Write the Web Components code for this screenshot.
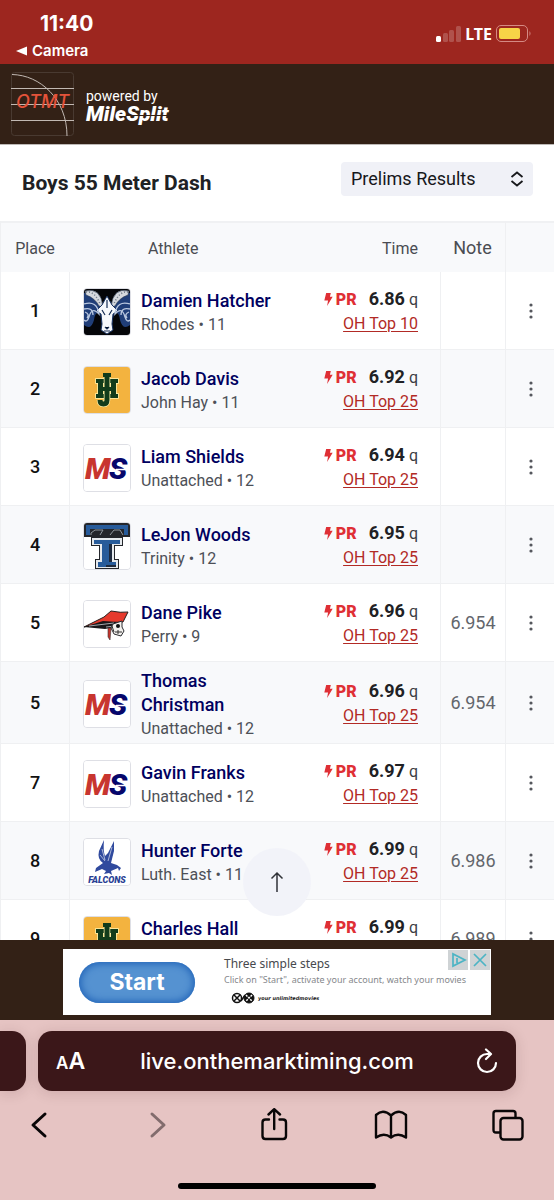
<!DOCTYPE html>
<html lang="en">
<head>
<meta charset="utf-8">
<meta name="viewport" content="width=device-width, initial-scale=1">
<title>Boys 55 Meter Dash</title>
<style>
  html, body { margin: 0; height: 100%; }
  body { font-family: Roboto, "Liberation Sans", sans-serif; color: #202124; background: #fff; }
</style>
</head>
<body>
<phone-screen>
  <status-bar slot="top" time="11:40" back="Camera" network="LTE"></status-bar>
  <site-header slot="top"></site-header>
  <event-bar heading="Boys 55 Meter Dash"></event-bar>
  <results-table></results-table>
  <ad-banner slot="bottom"></ad-banner>
  <browser-bar slot="bottom" address="live.onthemarktiming.com"></browser-bar>
</phone-screen>

<script>
class BaseElement extends HTMLElement {
  connectedCallback() {
    if (this.shadowRoot) return;
    const template = document.createElement('template');
    template.innerHTML = this.render();
    this.attachShadow({ mode: 'open' }).append(template.content.cloneNode(true));
  }
  render() { return ''; }
}

customElements.define('phone-screen', class extends BaseElement {
  render() {
    return `<style>
      :host { display: flex; flex-direction: column; height: 100vh; overflow: hidden; }
      header, footer { flex: none; }
      main { flex: 1; min-height: 0; position: relative; overflow: hidden; }
      .top { position: absolute; left: 50%; bottom: 24px; margin-left: -34px; width: 68px; height: 68px;
        display: grid; place-items: center; padding: 0; border: 0; border-radius: 50%; background: #f1f2f9f2; color: #303238; }
    </style>
    <header><slot name="top"></slot></header>
    <main><slot></slot>
      <button class="top" aria-label="Back to top">
        <svg width="16" height="22" viewBox="0 0 16 22" fill="none" stroke="currentColor" stroke-width="1.5"><path d="M8 21V2M2.500 7.500 8 2l5.500 5.500"/></svg>
      </button>
    </main>
    <footer><slot name="bottom"></slot></footer>`;
  }
});

customElements.define('status-bar', class extends BaseElement {
  render() {
    return `<style>
      :host { display: flex; justify-content: space-between; box-sizing: border-box; height: 64px; padding: 12px 22px 0 16px;
        background: #9d261f; color: #fff; font-family: Inter, "Liberation Sans", sans-serif; }
      time { display: block; padding-left: 24px; font-size: 21px; line-height: 24px; font-weight: 700; }
      a { display: flex; align-items: center; gap: 5px; margin-top: 6px; color: inherit; text-decoration: none; font-size: 15px; line-height: 18px; font-weight: 600; }
      .right { display: flex; align-items: center; gap: 4px; height: 43px; }
      .net { font: 700 16px/20px "Noto Sans", sans-serif; }
    </style>
    <div><time>${this.getAttribute('time')}</time>
      <a href="#camera"><svg width="11" height="10" viewBox="0 0 11 10"><path d="M0 5 11 .500v9z" fill="#fff"/></svg>${this.getAttribute('back')}</a></div>
    <div class="right">
      <svg width="25" height="16" viewBox="0 0 25 16" fill="#fff"><rect y="10" width="5" height="6" rx="1.500"/><g opacity=".2"><rect x="7" y="7" width="5" height="9" rx="1.500"/><rect x="13" y="4" width="5" height="12" rx="1.500"/><rect x="20" width="5" height="16" rx="1.500"/></g></svg>
      <span class="net">${this.getAttribute('network')}</span>
      <svg width="36" height="17" viewBox="0 0 36 17"><rect x=".500" y=".500" width="31" height="16" rx="4.500" fill="none" stroke="#d58a84"/><rect x="3" y="3" width="21" height="11" rx="2" fill="#f7d447"/><path d="M33.500 6q2 2.500 0 5z" fill="#d58a84"/></svg>
    </div>`;
  }
});

customElements.define('site-header', class extends BaseElement {
  render() {
    return `<style>
      :host { display: flex; align-items: center; gap: 11px; box-sizing: border-box; height: 81px; padding: 0 10px; background: #332116; border-bottom: 1px solid #bdb9b6; color: #fff; }
      a { display: block; color: inherit; text-decoration: none; }
      p { margin: 0; padding-top: 4px; font-size: 14px; line-height: 16px; }
      .ms { position: relative; font-size: 21px; line-height: 20px; font-weight: 900; font-style: italic; }
      .ms::after { content: ""; position: absolute; left: 41px; right: 2px; top: 11px; height: 1px; background: #332116; }
      svg { display: block; }
    </style>
    <a href="#home" aria-label="OTMT home"><svg width="65" height="66" viewBox="0 0 65 66" fill="none">
      <rect x="1.500" y="1.500" width="62" height="63" rx="3" stroke="#493a31"/>
      <path d="M1 17.500h63M1 33.500h63M1 49.500h63M2 3.500C30 4 57 28 57 65" stroke="#c2b9b3"/>
      <text x="6" y="37" font-family="Inter, sans-serif" font-style="italic" font-weight="500" font-size="18" fill="#e4533a">OTMT</text></svg></a>
    <div><p>powered by</p><a class="ms" href="#milesplit">MileSplit</a></div>`;
  }
});

customElements.define('event-bar', class extends BaseElement {
  render() {
    return `<style>
      :host { display: flex; justify-content: space-between; align-items: center; box-sizing: border-box; height: 76px; padding: 0 21px 0 22px; }
      h1 { margin: 0; font-size: 21px; line-height: 24px; font-weight: 700; }
      label { position: relative; margin-bottom: 8px; }
      select { appearance: none; display: block; width: 192px; height: 34px; padding: 0 36px 0 10px; border: 0; border-radius: 4px; background: #f0f1f7; color: #17181b; font: 400 18px/34px Roboto, sans-serif; }
      svg { position: absolute; right: 9px; top: 9px; pointer-events: none; }
    </style>
    <h1>${this.getAttribute('heading')}</h1>
    <label><select aria-label="Round"><option>Prelims Results</option></select>
      <svg width="14" height="16" viewBox="0 0 14 16" fill="none" stroke="#17181b" stroke-width="1.800"><path d="M1.500 6 7 1.500 12.500 6M1.500 10 7 14.500 12.500 10"/></svg></label>`;
  }
});

const EMBLEMS = {
  ram: `<rect width="46" height="46" fill="#050609"/>
    <path d="M0 4Q10 3 16 14L23 23 30 14Q36 3 46 4V36Q39 42 36 31Q35 22 30 24L27 41 23 45 19 41 16 24Q11 22 10 31Q7 42 0 36Z" fill="#203e78"/>
    <path d="M1 2Q17-2 19 18L15 17Q11 9 2 6ZM45 2Q29-2 27 18L31 17Q35 9 44 6Z" fill="#d5d8dd" stroke="#27354d" stroke-width=".6"/>
    <path d="M23 7 28 16 34 22 29 25 28 35 29 41 23 45 17 41 18 35 17 25 12 22 18 16Z" fill="#f6f8fc" stroke="#183261"/>
    <path d="M23 11v8M18 21l3 5M28 21l-3 5M21 38l2 2 2-2M20 42h6" stroke="#172d55" stroke-width="1.200"/>
    <path d="M0 15Q13 11 15 25Q8 17 5 28Q3 34 0 31M46 15Q33 11 31 25Q38 17 41 28Q43 34 46 31M0 20q9-2 9 6M46 20q-9-2-9 6M1 23q5 2 2 6M45 23q-5 2-2 6" fill="none" stroke="#b9c7df" stroke-width="1.300"/>
    <path d="M2 3q9-1 14 12M44 3q-9-1-14 12" fill="none" stroke="#6e7887" stroke-width="1.500" stroke-dasharray="1 2"/>`,
  jh: `<rect width="46" height="46" fill="#f3b33f"/>
    <g id="jh" fill="#123c1b" stroke="#fff0a8" stroke-width="1.600" paint-order="stroke">
      <rect x="14" y="13" width="5" height="17"/><rect x="27" y="13" width="5" height="17"/>
      <rect x="12" y="12" width="8" height="4"/><rect x="26" y="12" width="8" height="4"/>
      <rect x="12" y="27" width="8" height="4"/><rect x="26" y="27" width="8" height="4"/></g>
    <path d="M23 8V33Q23 37 19.500 37T16 33" fill="none" stroke="#fff0a8" stroke-width="6.500"/>
    <path d="M23 8V33Q23 37 19.500 37T16 33" fill="none" stroke="#123c1b" stroke-width="5"/>
    <g fill="#123c1b"><rect x="19" y="6" width="8" height="4"/><rect x="15" y="20" width="16" height="4"/>
      <rect x="14" y="14" width="5" height="15"/><rect x="27" y="14" width="5" height="15"/></g>`,
  ms: `<rect width="46" height="46" fill="#fff"/>
    <g font-family="Roboto, sans-serif" font-weight="900" font-style="italic" font-size="30"><text x="1" y="34" fill="#c8352f">M</text><text x="25" y="34" fill="#06066b">S</text></g>
    <path d="M32 24.500h12" stroke="#fff" stroke-width="1.400"/>`,
  tt: `<rect width="46" height="46" fill="#fff"/>
    <g fill="#24262b"><rect width="46" height="14"/><rect x="7" y="14" width="32" height="9"/><rect x="15" y="14" width="16" height="31"/><rect x="11" y="36" width="24" height="10"/></g>
    <g fill="#275b9a"><rect x="2" y="2" width="42" height="4"/><rect x="2" y="6" width="4" height="6"/><rect x="40" y="6" width="4" height="6"/></g>
    <path d="M7 12V10l4-3h8l-3 5M26 12l4-5h6l3 5" fill="none" stroke="#8f969d"/>
    <g fill="#e5e9ed"><rect x="8" y="15" width="30" height="7"/><rect x="16" y="15" width="14" height="29"/><rect x="12" y="37" width="22" height="8"/></g>
    <g fill="#275b9a"><rect x="10" y="17" width="26" height="4"/><rect x="18" y="17" width="10" height="26"/><rect x="14" y="39" width="18" height="5"/></g>
    <g fill="#1d293d"><rect x="25" y="21" width="3" height="18"/><rect x="22" y="42" width="10" height="2"/></g>`,
  pirate: `<rect width="46" height="46" fill="#fff"/>
    <path d="M0 26 20 16 27 10Q37 12 44 11L39 21 19 22Z" fill="#e63a2d" stroke="#26211f"/>
    <path d="M0 26 19 20 34 21 31 26 21 28Z" fill="#171719"/><path d="M5 25 30 22M22 26l9-1" stroke="#a6a8ac" fill="none"/>
    <path d="M29 23 38 20 38 26 40 30 37 35 30 33 27 27Z" fill="#f2f0ed" stroke="#2c2d31"/>
    <circle cx="34" cy="25" r="2" fill="#111"/><path d="M31 31h7M34 29v4M28 25l2 6" stroke="#333"/>
    <path d="M24 27h3l-1 12-2-3Z" fill="#c9342c" stroke="#333" stroke-width=".6"/>`,
  falcon: `<rect width="46" height="46" fill="#fff"/>
    <path d="M20 1 15 12Q13 20 19 24L12 29 11 33 18 30 22 32 20 35 25 34 28 36 27 32 34 29 35 32 37 29 33 26 27 24 30 12 30 2 24 14 21 17Q19 12 20 1Z" fill="#304a9e"/>
    <path d="m18 10 3 11M16 16l5 6M28 8l-4 14" stroke="#fff" stroke-width=".6"/>
    <text x="23" y="44" text-anchor="middle" font-family="Roboto, sans-serif" font-style="italic" font-weight="900" font-size="9" fill="#293f94">FALCONS</text>`
};

customElements.define('team-logo', class extends BaseElement {
  render() {
    return `<style>
      :host { display: block; flex: none; box-sizing: border-box; width: 48px; height: 48px; overflow: hidden; border: 1px solid #dedfe5; border-radius: 4px; }
      svg { display: block; }
    </style><svg width="46" height="46" viewBox="0 0 46 46" aria-hidden="true">${EMBLEMS[this.getAttribute('team')]}</svg>`;
  }
});

customElements.define('record-mark', class extends BaseElement {
  render() {
    return `<style>
      :host { display: inline-flex; align-items: baseline; gap: 3px; color: #df2f35; font-size: 16px; line-height: 24px; font-weight: 900; }
      svg { align-self: center; }
    </style><svg width="9" height="13" viewBox="0 0 9 14" fill="currentColor"><path d="M2 0h5L6 4h3L3 14 4 8H0Z"/></svg><slot></slot>`;
  }
});

const RESULTS = [
  ['1', 'ram', 'Damien Hatcher', 'Rhodes • 11', '6.86', 'OH Top 10', ''],
  ['2', 'jh', 'Jacob Davis', 'John Hay • 11', '6.92', 'OH Top 25', ''],
  ['3', 'ms', 'Liam Shields', 'Unattached • 12', '6.94', 'OH Top 25', ''],
  ['4', 'tt', 'LeJon Woods', 'Trinity • 12', '6.95', 'OH Top 25', ''],
  ['5', 'pirate', 'Dane Pike', 'Perry • 9', '6.96', 'OH Top 25', '6.954'],
  ['5', 'ms', 'Thomas Christman', 'Unattached • 12', '6.96', 'OH Top 25', '6.954'],
  ['7', 'ms', 'Gavin Franks', 'Unattached • 12', '6.97', 'OH Top 25', ''],
  ['8', 'falcon', 'Hunter Forte', 'Luth. East • 11', '6.99', 'OH Top 25', '6.986'],
  ['9', 'jh', 'Charles Hall', '', '6.99', '', '6.989']
];

customElements.define('results-table', class extends BaseElement {
  render() {
    const rows = RESULTS.map(([place, team, name, school, time, rank, note]) => `<tr>
      <td class="place">${place}</td>
      <td class="athlete"><div><team-logo team="${team}"></team-logo><span><a href="#athlete">${name}</a><small>${school}</small></span></div></td>
      <td class="time"><div><record-mark>PR</record-mark><b>${time}</b><i>q</i></div><a href="#rankings">${rank}</a></td>
      <td class="note">${note}</td>
      <td class="more"><button aria-label="More options"><svg width="4" height="16" viewBox="0 0 4 16" fill="#55575d"><circle cx="2" cy="2" r="1.600"/><circle cx="2" cy="8" r="1.600"/><circle cx="2" cy="14" r="1.600"/></svg></button></td></tr>`).join('');
    return `<style>
      :host { display: block; }
      table { width: 100%; table-layout: fixed; border-spacing: 0; border-left: 1px solid #eff0f2; }
      .c-place { width: 68px; } .c-time { width: 140px; } .c-note { width: 65px; } .c-more { width: 49px; }
      th { box-sizing: border-box; height: 51px; padding: 2px 0 0; border-top: 2px solid #f0f1f3; background: #f8f9fb; color: #4a4c52; font-size: 16px; line-height: 24px; font-weight: 400; text-align: center; }
      th.h-athlete { padding-left: 79px; text-align: left; }
      th.h-time { padding-right: 22px; text-align: right; }
      th.h-note { padding-top: 0; font-size: 18px; }
      th:last-child, td + td { border-left: 1px solid #eff0f2; }
      td { box-sizing: border-box; height: 78px; padding: 5px 0 4px; border-bottom: 1px solid #eff0f2; }
      tr:nth-child(even) td { background: #f8f9fb; }
      td.place { text-align: center; font-size: 18px; line-height: 24px; font-weight: 500; color: #111; }
      td.athlete { padding: 4px 10px 2px 13px; }
      .athlete div { display: flex; align-items: center; gap: 10px; }
      .athlete span { padding-top: 3px; }
      .athlete a { display: block; color: #00005f; text-decoration: none; font-size: 18px; line-height: 24px; font-weight: 500; }
      small { display: block; min-height: 24px; color: #4d5057; font-size: 16px; line-height: 24px; }
      td.time { border-left: 0; padding-right: 22px; text-align: right; white-space: nowrap; }
      .time div { display: flex; justify-content: flex-end; align-items: baseline; line-height: 24px; }
      .time b { margin-left: 12px; font-size: 18px; font-weight: 700; }
      .time i { margin-left: 4px; font-size: 16px; font-style: normal; color: #3c3e43; }
      .time > a { display: block; min-height: 24px; color: #b22a25; font-size: 16px; line-height: 24px; text-underline-offset: 2px; }
      td.note { text-align: center; color: #63666c; font-size: 18px; line-height: 24px; }
      td.more { padding-left: 2px; text-align: center; }
      button { padding: 8px; border: 0; background: none; vertical-align: middle; }
      svg { display: block; }
    </style>
    <table>
      <colgroup><col class="c-place"><col><col class="c-time"><col class="c-note"><col class="c-more"></colgroup>
      <thead><tr><th>Place</th><th class="h-athlete">Athlete</th><th class="h-time">Time</th><th class="h-note">Note</th><th></th></tr></thead>
      <tbody>${rows}</tbody>
    </table>`;
  }
});

customElements.define('ad-banner', class extends BaseElement {
  render() {
    return `<style>
      :host { display: flex; justify-content: center; box-sizing: border-box; height: 80px; padding: 9px 0 5px; background: #332116; }
      section { position: relative; display: flex; align-items: center; gap: 29px; box-sizing: border-box; width: 428px; padding-left: 16px; background: #fff; }
      .start { display: grid; place-items: center; width: 116px; height: 41px; border-radius: 21px; background: #5592d1; box-shadow: inset 0 0 7px 2px #2466b9; color: #fff; text-decoration: none; font: 700 23px/40px Inter, sans-serif; }
      p { margin: 0; white-space: nowrap; }
      .title { color: #47494d; font: 400 12px/17px "Noto Sans", sans-serif; }
      .copy { color: #85878b; font: 400 9px/15px "Noto Sans", sans-serif; }
      .brand { display: flex; align-items: center; gap: 3px; height: 22px; padding-left: 7px; color: #222; font: italic 700 5px/8px "DejaVu Sans", sans-serif; }
      .tools { position: absolute; top: 1px; right: 1px; display: flex; gap: 2px; }
      button { display: block; width: 20px; height: 20px; padding: 0; border: 0; background: #cfd3d5; }
      svg { display: block; }
    </style>
    <section aria-label="Advertisement">
      <a class="start" href="#start">Start</a>
      <div><p class="title">Three simple steps</p><p class="copy">Click on "Start", activate your account, watch your movies</p>
      <p class="brand"><svg width="24" height="12" viewBox="0 0 24 12" fill="none" stroke="#111"><circle cx="6" cy="6" r="4.500" stroke-width="1.500"/><path d="m3 3 6 6M9 3 3 9M10 9l4-6" stroke-width="1.500"/><circle cx="18" cy="6" r="5" fill="#111"/><path d="m15 3 6 6M21 3l-6 6" stroke="#fff" stroke-width="1.500" stroke-dasharray="2 1"/></svg>your unlimitedmovies</p></div>
      <div class="tools"><button aria-label="Ad choices"><svg width="20" height="20" viewBox="0 0 20 20" fill="none" stroke="#4cb4c4" stroke-width="1.700"><path d="M5 4v12l12-6ZM9 8v5"/></svg></button>
      <button aria-label="Close ad"><svg width="20" height="20" viewBox="0 0 20 20" stroke="#4cb4c4" stroke-width="1.700"><path d="m4 4 12 12M16 4 4 16"/></svg></button></div>
    </section>`;
  }
});

customElements.define('browser-bar', class extends BaseElement {
  render() {
    return `<style>
      :host { display: flex; flex-direction: column; box-sizing: border-box; height: 180px; padding-top: 11px; background: #e6c4c3; font-family: Inter, "Liberation Sans", sans-serif; }
      .tabs { display: flex; gap: 12px; padding-right: 38px; }
      .peek, .bar { height: 60px; background: #3b1719; box-shadow: 0 2px 14px #3b171926; }
      .peek { width: 26px; border-radius: 0 14px 14px 0; }
      .bar { flex: 1; display: flex; align-items: center; justify-content: space-between; box-sizing: border-box; padding: 0 18px; border-radius: 14px; color: #fff; }
      button { display: grid; place-items: center; width: 34px; height: 34px; padding: 0; border: 0; background: none; color: inherit; font: inherit; }
      .aa { display: flex; align-items: baseline; justify-content: flex-start; width: 30px; font-size: 23px; line-height: 34px; font-weight: 600; }
      .aa small { font-size: 17px; }
      input { flex: 1; min-width: 0; height: 34px; padding: 0 8px 0 0; border: 0; background: none; color: inherit; font: 500 22px/34px Inter, sans-serif; text-align: center; }
      .reload { width: 22px; }
      nav { display: flex; justify-content: space-between; margin-top: 17px; padding: 0 29px 0 22px; color: #090607; }
      .off { color: #826c6d; }
      .home { width: 198px; height: 6px; margin: auto auto 11px; border-radius: 3px; background: #000; }
      svg { display: block; }
    </style>
    <div class="tabs"><div class="peek"></div>
      <div class="bar"><button class="aa" aria-label="Page settings"><small>A</small><span>A</span></button>
        <input aria-label="Address" value="${this.getAttribute('address')}">
        <button class="reload" aria-label="Reload"><svg width="22" height="26" viewBox="0 0 22 26" fill="none" stroke="#fff" stroke-width="2.200" stroke-linecap="round" stroke-linejoin="round"><path d="M13 6H11A9 9 0 1 0 20 15M10 1.500 15 6 10 11"/></svg></button></div></div>
    <nav>
      <button aria-label="Back"><svg width="34" height="34" viewBox="0 0 34 34" fill="none" stroke="currentColor" stroke-width="3" stroke-linecap="round" stroke-linejoin="round"><path d="M23 6 11 17 23 28"/></svg></button>
      <button class="off" aria-label="Forward"><svg width="34" height="34" viewBox="0 0 34 34" fill="none" stroke="currentColor" stroke-width="3" stroke-linecap="round" stroke-linejoin="round"><path d="M13 6 25 17 13 28"/></svg></button>
      <button aria-label="Share"><svg width="34" height="34" viewBox="0 0 34 34" fill="none" stroke="currentColor" stroke-width="2.400" stroke-linecap="round" stroke-linejoin="round"><path d="M12 11.500H8.500Q5.500 11.500 5.500 14.500V28Q5.500 31 8.500 31H26Q29 31 29 28V14.500Q29 11.500 26 11.500H22.500M17.200 21V1.500M11.500 6.500 17.200 1.200 23 6.500"/></svg></button>
      <button aria-label="Bookmarks"><svg width="34" height="34" viewBox="0 0 34 34" fill="none" stroke="currentColor" stroke-width="2.400" stroke-linejoin="round"><path d="M17 7.500Q9 .500 2 7V29.500Q10 24 17 29.500 24 24 32 29.500V7Q25 .500 17 7.500ZM17 7.500V29"/></svg></button>
      <button aria-label="Tabs"><svg width="34" height="34" viewBox="0 0 34 34" fill="none" stroke="currentColor" stroke-width="2.400"><path d="M9.500 24.500H5Q2.500 24.500 2.500 22V5.500Q2.500 3 5 3H22Q24.500 3 24.500 5.500V10"/><rect x="9.500" y="10" width="22" height="21.500" rx="3"/></svg></button>
    </nav>
    <div class="home"></div>`;
  }
});
</script>
</body>
</html>
